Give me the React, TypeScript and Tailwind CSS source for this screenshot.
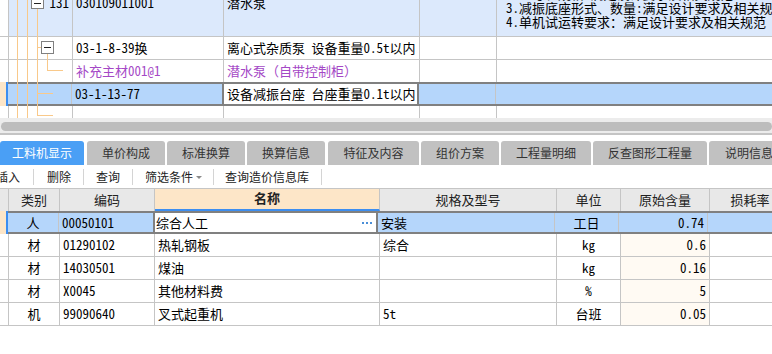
import React from "react";

const mono = "font-['Noto_Sans_Mono_CJK_SC','Noto_Sans_CJK_SC',monospace] text-[13px]";
const sans = "font-['Noto_Sans_CJK_SC','Noto_Sans',sans-serif]";

const TABS = [
  { label: "工料机显示", w: "w-[84px]", ml: "ml-0", active: true },
  { label: "单价构成", w: "w-[78px]", ml: "ml-[3px]" },
  { label: "标准换算", w: "w-[78px]", ml: "ml-[2px]" },
  { label: "换算信息", w: "w-[78px]", ml: "ml-[2px]" },
  { label: "特征及内容", w: "w-[91px]", ml: "ml-[3px]" },
  { label: "组价方案", w: "w-[78px]", ml: "ml-[2px]" },
  { label: "工程量明细", w: "w-[90px]", ml: "ml-[2px]" },
  { label: "反查图形工程量", w: "w-[114px]", ml: "ml-[2px]" },
  { label: "说明信息", w: "w-[80px]", ml: "ml-[2px]" },
];

const ROWS = [
  { type: "材", code: "01290102", name: "热轧钢板", spec: "综合", unit: "kg", qty: "0.6" },
  { type: "材", code: "14030501", name: "煤油", spec: "", unit: "kg", qty: "0.16" },
  { type: "材", code: "X0045", name: "其他材料费", spec: "", unit: "%", qty: "5" },
  { type: "机", code: "99090640", name: "叉式起重机", spec: "5t", unit: "台班", qty: "0.05" },
];

// tree lines in the upper grid
const TreeLines = () => (
  <svg className="pointer-events-none absolute left-0 top-0" width="72" height="118">
    <g stroke="#f9c98a" strokeWidth="1" shapeRendering="crispEdges">
      <line x1="17.5" y1="0" x2="17.5" y2="118" />
      <line x1="27.5" y1="0" x2="27.5" y2="118" />
      <line x1="37.5" y1="9" x2="37.5" y2="115" />
      <line x1="37" y1="47.5" x2="41" y2="47.5" />
      <line x1="47.5" y1="53" x2="47.5" y2="70" />
      <line x1="47" y1="70.5" x2="63" y2="70.5" />
      <line x1="37" y1="93.5" x2="53" y2="93.5" />
      <line x1="37" y1="115.5" x2="53" y2="115.5" />
    </g>
    <g shapeRendering="crispEdges">
      <rect x="31.5" y="-3.5" width="12" height="12" fill="#fff" stroke="#808080" />
      <line x1="34" y1="3.5" x2="41" y2="3.5" stroke="#222" />
      <rect x="41.5" y="41.5" width="12" height="12" fill="#fff" stroke="#808080" />
      <line x1="44" y1="47.5" x2="51" y2="47.5" stroke="#222" />
    </g>
  </svg>
);

const TopGrid = () => (
  <div className={`relative h-[118px] overflow-hidden ${mono} text-black`}>
    <div className="-mt-[30px]">
      <div className="flex h-[67px] border-b border-[#c5c5c5] leading-[14px]">
        <div className="w-[9px] shrink-0 border-r border-[#c5c5c5] bg-white" />
        <div className="flex w-[64px] shrink-0 justify-end border-r border-[#c5c5c5] bg-[#dce9fc] pr-[3px] pt-[26px]">131</div>
        <div className="w-[151px] shrink-0 border-r border-[#c5c5c5] bg-[#dce9fc] pl-[3px] pt-[26px]">030109011001</div>
        <div className="w-[196px] shrink-0 border-r border-[#c5c5c5] bg-[#dce9fc] pl-[3px] pt-[26px]">潜水泵</div>
        <div className="w-[77px] shrink-0 border-r border-[#c5c5c5] bg-[#dce9fc]" />
        <div className="min-w-0 flex-1 overflow-hidden whitespace-nowrap bg-[#dce9fc] pl-[9px] pt-[3px]">
          <div>1.名称:潜水泵</div>
          <div>2.型号、规格:满足设计要求及相关规范</div>
          <div>3.减振底座形式、数量:满足设计要求及相关规范</div>
          <div>4.单机试运转要求：满足设计要求及相关规范</div>
        </div>
      </div>
      <div className="flex h-[23px] items-center border-b border-[#c5c5c5]">
        <div className="h-full w-[9px] shrink-0 border-r border-[#c5c5c5]" />
        <div className="h-full w-[64px] shrink-0 border-r border-[#c5c5c5]" />
        <div className="flex h-full w-[151px] shrink-0 items-center border-r border-[#c5c5c5] pl-[3px]">03-1-8-39换</div>
        <div className="flex h-full w-[196px] shrink-0 items-center whitespace-nowrap border-r border-[#c5c5c5] pl-[3px]">离心式杂质泵 设备重量0.5t以内</div>
        <div className="h-full w-[77px] shrink-0 border-r border-[#c5c5c5]" />
        <div className="flex-1" />
      </div>
      <div className="flex h-[22px] items-center text-[#a448c6]">
        <div className="h-full w-[9px] shrink-0 border-r border-[#c5c5c5]" />
        <div className="h-full w-[64px] shrink-0 border-r border-[#c5c5c5]" />
        <div className="flex h-full w-[151px] shrink-0 items-center border-r border-[#c5c5c5] pl-[3px]">补充主材001@1</div>
        <div className="flex h-full w-[196px] shrink-0 items-center border-r border-[#c5c5c5] pl-[3px]">潜水泵（自带控制柜）</div>
        <div className="h-full w-[77px] shrink-0 border-r border-[#c5c5c5]" />
        <div className="flex-1" />
      </div>
      <div className="flex h-[24px]">
        <div className="h-full w-[8px] shrink-0 border-r-2 border-[#3d8ef0] bg-[#fde6c8]" />
        <div className="flex h-full flex-1 border-y-2 border-[#808080] bg-[#b5d6fb]">
          <div className="h-full w-[64px] shrink-0 border-r border-[#c5c5c5]" />
          <div className="flex h-full w-[150px] shrink-0 items-center pl-[3px]">03-1-13-77</div>
          <div className="flex h-full w-[197px] shrink-0 items-center whitespace-nowrap border-x-2 border-[#808080] bg-white pl-[3px]">设备减振台座 台座重量0.1t以内</div>
          <div className="h-full w-[77px] shrink-0 border-r border-[#c5c5c5]" />
          <div className="flex-1" />
        </div>
      </div>
      <div className="flex h-[20px]">
        <div className="h-full w-[9px] shrink-0 border-r border-[#c5c5c5]" />
        <div className="h-full w-[64px] shrink-0 border-r border-[#c5c5c5]" />
        <div className="h-full w-[151px] shrink-0 border-r border-[#c5c5c5]" />
        <div className="h-full w-[196px] shrink-0 border-r border-[#c5c5c5]" />
        <div className="h-full w-[77px] shrink-0 border-r border-[#c5c5c5]" />
      </div>
    </div>
    <TreeLines />
  </div>
);

const ScrollBar = () => (
  <div>
    <div className="h-[15px] bg-[#ececec] pt-[4px]">
      <div className="ml-[1px] h-[9px] rounded-[5px] bg-[#bdbdbd]" />
    </div>
    <div className="h-[2px] bg-[#c4c4c4]" />
    <div className="h-[6px] bg-white" />
  </div>
);

const Tabs = () => (
  <div className={`flex h-[24px] ${sans} text-[12px]`}>
    {TABS.map((t) => (
      <div
        key={t.label}
        className={`${t.w} ${t.ml} flex shrink-0 items-center justify-center whitespace-nowrap rounded-t-[3px] ${
          t.active ? "bg-[#4a9ff5] text-white" : "bg-[#c1c1c1] text-[#333]"
        }`}
      >
        {t.label}
      </div>
    ))}
  </div>
);

const Sep = ({ mx = "mx-[12px]" }: { mx?: string }) => <div className={`${mx} h-[16px] w-px bg-[#d4d4d4]`} />;

const Toolbar = () => (
  <div className={`flex h-[23px] items-center ${sans} text-[12px] text-[#222]`}>
    <span className="-ml-[4px]">插入</span>
    <Sep mx="mx-[13px]" />
    <span>删除</span>
    <Sep />
    <span>查询</span>
    <Sep />
    <span>筛选条件</span>
    <span className="ml-[3px] mt-[2px] h-0 w-0 border-x-[3px] border-t-[3px] border-x-transparent border-t-[#8a8a8a]" />
    <Sep mx="mx-[11px]" />
    <span>查询造价信息库</span>
    <Sep />
  </div>
);

const Header = () => (
  <div className={`flex h-[23px] border-t border-[#c5c5c5] bg-[#e8e8e8] ${sans} text-[13px] text-[#222]`}>
    <div className="w-[9px] shrink-0 border-r border-[#c5c5c5]" />
    <div className="flex w-[51px] shrink-0 items-center justify-center border-r border-[#c5c5c5]">类别</div>
    <div className="flex w-[95px] shrink-0 items-center justify-center border-r border-[#c5c5c5]">编码</div>
    <div className="flex w-[225px] shrink-0 items-center justify-center border-b-2 border-r border-b-[#3d8ef0] border-r-[#c5c5c5] bg-[#fde6c8] pb-[2px] font-bold">名称</div>
    <div className="flex w-[177px] shrink-0 items-center justify-center border-r border-[#c5c5c5]">规格及型号</div>
    <div className="flex w-[64px] shrink-0 items-center justify-center border-r border-[#c5c5c5]">单位</div>
    <div className="flex w-[89px] shrink-0 items-center justify-center border-r border-[#c5c5c5]">原始含量</div>
    <div className="flex w-[80px] shrink-0 items-center justify-center">损耗率</div>
  </div>
);

const SelectedRow = () => (
  <div className={`flex h-[23px] ${mono}`}>
    <div className="w-[8px] shrink-0 border-r-2 border-[#3d8ef0] bg-[#fde6c8]" />
    <div className="flex flex-1 border-y-2 border-[#808080] bg-[#b5d6fb]">
      <div className="flex w-[51px] shrink-0 items-center justify-center border-r border-[#c5c5c5]">人</div>
      <div className="flex w-[94px] shrink-0 items-center pl-[3px]">00050101</div>
      <div className="flex w-[225px] shrink-0 items-center justify-between border-x-2 border-[#808080] bg-white pl-[1px] pr-[4px]">
        <span>综合人工</span>
        <span className="flex gap-[2px]">
          <span className="h-[2px] w-[2px] bg-[#4a8fd8]" />
          <span className="h-[2px] w-[2px] bg-[#4a8fd8]" />
          <span className="h-[2px] w-[2px] bg-[#4a8fd8]" />
        </span>
      </div>
      <div className="flex w-[177px] shrink-0 items-center border-r border-[#c5c5c5] pl-[3px]">安装</div>
      <div className="flex w-[64px] shrink-0 items-center justify-center border-r border-[#c5c5c5]">工日</div>
      <div className="flex w-[89px] shrink-0 items-center justify-end border-r border-[#c5c5c5] pr-[3px]">0.74</div>
      <div className="flex-1" />
    </div>
  </div>
);

const BodyRow = ({ r }: { r: (typeof ROWS)[number] }) => (
  <div className={`flex h-[23px] border-b border-[#c5c5c5] ${mono}`}>
    <div className="w-[9px] shrink-0 border-r border-[#c5c5c5]" />
    <div className="flex w-[51px] shrink-0 items-center justify-center border-r border-[#c5c5c5]">{r.type}</div>
    <div className="flex w-[95px] shrink-0 items-center border-r border-[#c5c5c5] pl-[3px]">{r.code}</div>
    <div className="flex w-[225px] shrink-0 items-center border-r border-[#c5c5c5] pl-[3px]">{r.name}</div>
    <div className="flex w-[177px] shrink-0 items-center border-r border-[#c5c5c5] pl-[3px]">{r.spec}</div>
    <div className="flex w-[64px] shrink-0 items-center justify-center border-r border-[#c5c5c5]">{r.unit}</div>
    <div className="flex w-[89px] shrink-0 items-center justify-end border-r border-[#c5c5c5] bg-[#fffaf3] pr-[3px]">{r.qty}</div>
    <div className="flex-1" />
  </div>
);

export default function App() {
  return (
    <div className="h-[354px] w-[772px] overflow-hidden bg-white text-black">
      <TopGrid />
      <ScrollBar />
      <Tabs />
      <Toolbar />
      <Header />
      <SelectedRow />
      {ROWS.map((r) => (
        <BodyRow key={r.code} r={r} />
      ))}
    </div>
  );
}
